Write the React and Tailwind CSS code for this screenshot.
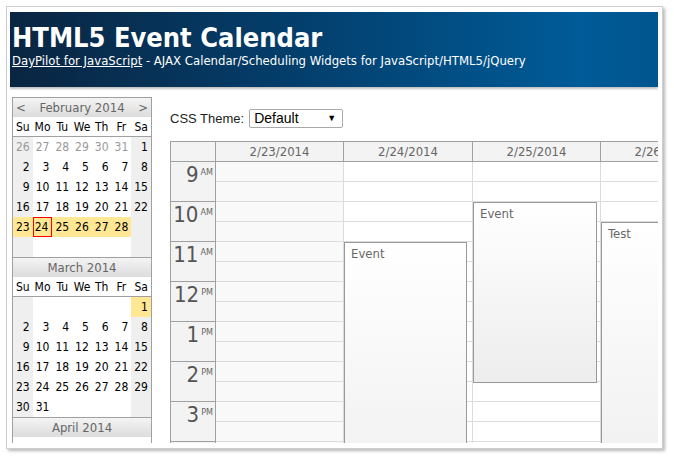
import React from "react";

const tahoma = "[font-family:'DejaVu_Sans_Condensed','DejaVu_Sans',sans-serif]";
const arial = "[font-family:'Liberation_Sans',Arial,sans-serif]";

const dayNames = ["Su", "Mo", "Tu", "We", "Th", "Fr", "Sa"];

// o = other month, s = selected, t = today
const february = [
  [{ d: 26, o: 1 }, { d: 27, o: 1 }, { d: 28, o: 1 }, { d: 29, o: 1 }, { d: 30, o: 1 }, { d: 31, o: 1 }, { d: 1 }],
  [{ d: 2 }, { d: 3 }, { d: 4 }, { d: 5 }, { d: 6 }, { d: 7 }, { d: 8 }],
  [{ d: 9 }, { d: 10 }, { d: 11 }, { d: 12 }, { d: 13 }, { d: 14 }, { d: 15 }],
  [{ d: 16 }, { d: 17 }, { d: 18 }, { d: 19 }, { d: 20 }, { d: 21 }, { d: 22 }],
  [{ d: 23, s: 1 }, { d: 24, s: 1, t: 1 }, { d: 25, s: 1 }, { d: 26, s: 1 }, { d: 27, s: 1 }, { d: 28, s: 1 }, {}],
  [{}, {}, {}, {}, {}, {}, {}],
];

const march = [
  [{}, {}, {}, {}, {}, {}, { d: 1, s: 1 }],
  [{ d: 2 }, { d: 3 }, { d: 4 }, { d: 5 }, { d: 6 }, { d: 7 }, { d: 8 }],
  [{ d: 9 }, { d: 10 }, { d: 11 }, { d: 12 }, { d: 13 }, { d: 14 }, { d: 15 }],
  [{ d: 16 }, { d: 17 }, { d: 18 }, { d: 19 }, { d: 20 }, { d: 21 }, { d: 22 }],
  [{ d: 23 }, { d: 24 }, { d: 25 }, { d: 26 }, { d: 27 }, { d: 28 }, { d: 29 }],
  [{ d: 30 }, { d: 31 }, {}, {}, {}, {}, {}],
];

// the 4 PM row only peeks in at the bottom edge, so it has no label
const hours = [
  { id: 9, h: "9", ap: "AM" },
  { id: 10, h: "10", ap: "AM" },
  { id: 11, h: "11", ap: "AM" },
  { id: 12, h: "12", ap: "PM" },
  { id: 13, h: "1", ap: "PM" },
  { id: 14, h: "2", ap: "PM" },
  { id: 15, h: "3", ap: "PM" },
  { id: 16, h: "", ap: "" },
];

const columns = [
  { label: "2/23/2014", width: "w-[128px]", weekend: true },
  { label: "2/24/2014", width: "w-[129px]", events: [{ text: "Event", top: "top-[80px]", h: "h-[300px]", w: "w-[123px]" }] },
  { label: "2/25/2014", width: "w-[128px]", events: [{ text: "Event", top: "top-[40px]", h: "h-[181px]", w: "w-[124px]" }] },
  { label: "2/26/2014", width: "w-[128px]", events: [{ text: "Test", top: "top-[60px]", h: "h-[300px]", w: "w-[123px]" }] },
];

function Month({ title, arrows, weeks }) {
  return (
    <div>
      <div className="flex h-[20px] items-center justify-between border-t border-[#a0a0a0] bg-linear-to-b from-[#f4f4f4] to-[#dcdcdc] px-[3px] text-[13px] text-[#666]">
        <span className="w-[10px]">{arrows ? "<" : ""}</span>
        <span>{title}</span>
        <span className="w-[10px] text-right">{arrows ? ">" : ""}</span>
      </div>
      {weeks ? (
        <>
          <div className="grid h-[20px] grid-cols-7 border-b border-[#a0a0a0] bg-white">
            {dayNames.map((n) => (
              <div key={n} className="flex items-center justify-center text-[12px] text-black">
                {n}
              </div>
            ))}
          </div>
          {weeks.map((week, w) => (
            <div key={w} className="grid grid-cols-7">
              {week.map((c, i) => {
                const bg = c.s ? "bg-[#ffe794]" : i === 0 || i === 6 ? "bg-[#efefef]" : "bg-white";
                const color = c.o ? "text-[#999]" : "text-black";
                const today = c.t ? "border border-[#ff0000]" : "";
                return (
                  <div key={i} className={`flex h-[20px] items-center justify-end pr-[3px] text-[12px] ${bg} ${color} ${today}`}>
                    {c.d}
                  </div>
                );
              })}
            </div>
          ))}
        </>
      ) : (
        <div className="h-[20px] bg-white" />
      )}
    </div>
  );
}

function Navigator() {
  return (
    <div className={`ml-[2px] w-[140px] shrink-0 border-r border-l border-[#a0a0a0] ${tahoma}`}>
      <Month title="February 2014" arrows weeks={february} />
      <Month title="March 2014" weeks={march} />
      <Month title="April 2014" />
    </div>
  );
}

function Calendar() {
  return (
    <div className={`w-max border-t border-l border-[#a0a0a0] ${tahoma}`}>
      {/* column headers */}
      <div className="flex h-[20px] border-b border-[#a0a0a0] bg-[#f3f3f3]">
        <div className="w-[45px] border-r border-[#a0a0a0]" />
        {columns.map((c) => (
          <div key={c.label} className={`${c.width} flex items-center justify-center border-r border-[#a0a0a0] text-[13px] text-[#666]`}>
            {c.label}
          </div>
        ))}
      </div>

      <div className="flex">
        {/* hour headers */}
        <div className="w-[45px] border-r border-[#a0a0a0] bg-[#f3f3f3]">
          {hours.map((r) => (
            <div key={r.id} className="flex h-[40px] justify-end border-b border-[#a0a0a0] pt-[1px] pr-[2px] text-[#555]">
              <span className="text-[22px] leading-[24px]">{r.h}</span>
              <span className="ml-[2px] pt-[3px] text-[9px] leading-[12px] text-[#666]">{r.ap}</span>
            </div>
          ))}
        </div>

        {/* day columns */}
        {columns.map((c) => (
          <div key={c.label} className={`${c.width} relative border-r border-[#dcdcdc]`}>
            {hours.map((r) => (
              <div key={r.id}>
                <div className={`h-[20px] border-b border-[#dcdcdc] ${c.weekend ? "bg-[#f9f9f9]" : "bg-white"}`} />
                <div className={`h-[20px] border-b border-[#dcdcdc] ${c.weekend ? "bg-[#f9f9f9]" : "bg-white"}`} />
              </div>
            ))}
            {(c.events || []).map((e) => (
              <div
                key={e.text}
                className={`absolute left-0 ${e.top} ${e.h} ${e.w} border border-[#999] bg-linear-to-b from-white to-[#ededed] px-[6px] pt-[1px] text-[13px] text-[#666]`}
              >
                {e.text}
              </div>
            ))}
          </div>
        ))}
      </div>
    </div>
  );
}

export default function App() {
  return (
    <div className="min-h-screen bg-white pt-[6px] pl-[6px]">
      <div className="h-[443px] w-[657px] border border-[#cfcfcf] bg-white pt-[5px] pr-[4px] pb-[5px] pl-[3px] shadow-[2px_2px_3px_rgba(0,0,0,0.28)]">
        <div className="h-[431px] w-[648px] overflow-hidden">
          {/* Header */}
          <div className={`h-[75px] bg-[linear-gradient(to_right,#0a2541,#033f6d_45%,#005b98_88%,#00558e)] px-[2px] pt-[10px] text-white shadow-[0_2px_2px_rgba(0,0,0,0.25)] ${tahoma}`}>
            <div className="text-[27px] leading-[32px] font-bold">HTML5 Event Calendar</div>
            <div className="text-[13px] leading-[14px]">
              <a href="#" className="underline">DayPilot for JavaScript</a> - AJAX Calendar/Scheduling Widgets for JavaScript/HTML5/jQuery
            </div>
          </div>

          <div className="mt-[10px] flex">
            <Navigator />

            <div className="min-w-0 flex-1 overflow-hidden pt-[12px] pl-[18px]">
              <div className={`flex h-[19px] items-center gap-[5px] text-[13px] text-[#222] ${arial}`}>
                <span>CSS Theme:</span>
                <div className="flex h-[19px] w-[94px] items-center justify-between rounded-[2px] border border-[#a9a9a9] bg-white pr-[6px] pl-[4px] text-black">
                  <span className="text-[14px]">Default</span>
                  <span className="text-[9px]">▼</span>
                </div>
              </div>
              <div className="mt-[13px]">
                <Calendar />
              </div>
            </div>
          </div>
        </div>
      </div>
    </div>
  );
}
